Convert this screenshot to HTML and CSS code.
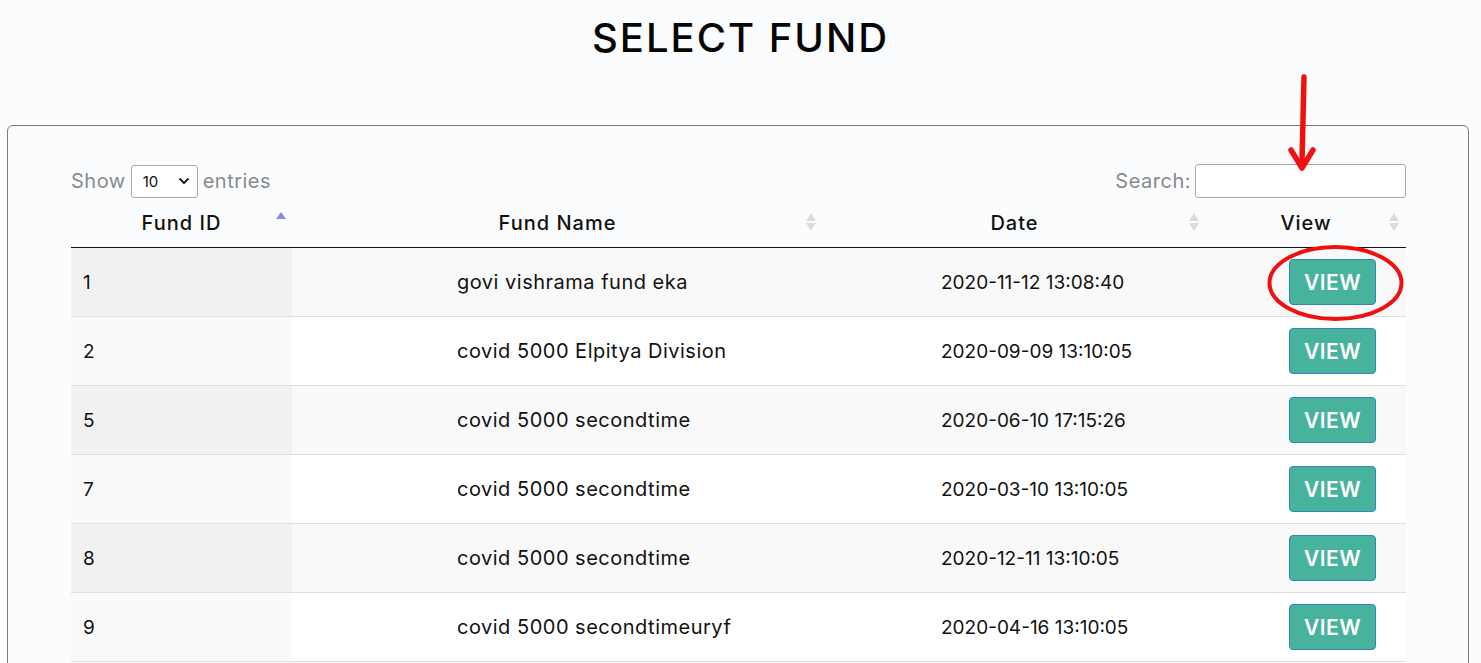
FILE: index.html
```html
<!DOCTYPE html>
<html lang="en">
<head>
<meta charset="utf-8">
<title>Select Fund</title>
<link rel="stylesheet" href="styles.css">
</head>
<body>
<h1 class="title">SELECT FUND</h1>
<div class="card">
  <div class="controls">
    <label class="length">Show
      <span class="select"><span class="select-val">10</span>
        <svg class="chev" width="12" height="8" viewBox="0 0 12 8"><path d="M1.5 1.5 L6 6 L10.5 1.5" fill="none" stroke="#222" stroke-width="2"/></svg>
      </span>
    entries</label>
    <label class="search">Search:<input type="text" class="search-input"></label>
  </div>
  <table class="funds">
    <colgroup>
      <col class="c1"><col class="c2"><col class="c3"><col class="c4">
    </colgroup>
    <thead>
      <tr>
        <th class="sort asc">Fund ID</th>
        <th class="sort">Fund Name</th>
        <th class="sort">Date</th>
        <th class="sort">View</th>
      </tr>
    </thead>
    <tbody>
      <tr><td class="id">1</td><td class="name">govi vishrama fund eka</td><td class="date">2020-11-12 13:08:40</td><td class="act"><button class="btn">VIEW</button></td></tr>
      <tr><td class="id">2</td><td class="name">covid 5000 Elpitya Division</td><td class="date">2020-09-09 13:10:05</td><td class="act"><button class="btn">VIEW</button></td></tr>
      <tr><td class="id">5</td><td class="name">covid 5000 secondtime</td><td class="date">2020-06-10 17:15:26</td><td class="act"><button class="btn">VIEW</button></td></tr>
      <tr><td class="id">7</td><td class="name">covid 5000 secondtime</td><td class="date">2020-03-10 13:10:05</td><td class="act"><button class="btn">VIEW</button></td></tr>
      <tr><td class="id">8</td><td class="name">covid 5000 secondtime</td><td class="date">2020-12-11 13:10:05</td><td class="act"><button class="btn">VIEW</button></td></tr>
      <tr><td class="id">9</td><td class="name">covid 5000 secondtimeuryf</td><td class="date">2020-04-16 13:10:05</td><td class="act"><button class="btn">VIEW</button></td></tr>
    </tbody>
  </table>
</div>
<svg class="annot" width="1481" height="663" viewBox="0 0 1481 663">
  <path d="M1304 77 L1302 162" stroke="#f01010" stroke-width="5.5" stroke-linecap="round" fill="none"/>
  <path d="M1291 150 L1302 168 L1313 150" stroke="#f01010" stroke-width="5.5" stroke-linecap="round" stroke-linejoin="round" fill="none"/>
  <ellipse cx="1335.5" cy="283" rx="66" ry="36" stroke="#ee1111" stroke-width="4" fill="none"/>
</svg>
</body>
</html>
```
FILE: styles.css
```css
html, body {
  margin: 0;
  padding: 0;
}
body {
  background: #fbfcfe;
  font-family: Inter, "Noto Sans", sans-serif;
  color: #111;
  height: 663px;
  overflow: hidden;
}
.title {
  margin: 0;
  padding-top: 14px;
  text-align: center;
  font-size: 40px;
  font-weight: 500;
  line-height: 48px;
  letter-spacing: 2px;
  color: #050505;
}
.card {
  margin: 63px 12px 0 7px;
  border: 1px solid #7a7a7a;
  border-radius: 6px;
  padding: 38px 62px 0 63px;
  height: 600px;
}
.controls {
  display: flex;
  justify-content: space-between;
  align-items: center;
  height: 34px;
  color: #8a8a8a;
  font-size: 20px;
  letter-spacing: 0.5px;
}
.length {
  display: flex;
  align-items: center;
  gap: 5px;
}
.select {
  display: inline-flex;
  align-items: center;
  justify-content: space-between;
  box-sizing: border-box;
  width: 67px;
  height: 33px;
  border: 1px solid #aaa;
  border-radius: 3px;
  padding: 0 7px 0 11px;
  background: #fff;
  color: #111;
  font-size: 15px;
  letter-spacing: 0;
}
.search {
  display: flex;
  align-items: center;
  gap: 4px;
}
.search-input {
  box-sizing: border-box;
  width: 211px;
  height: 34px;
  border: 1px solid #aaa;
  border-radius: 3px;
  background: #fff;
  margin: 0;
}
.funds {
  width: 1335px;
  border-collapse: collapse;
  table-layout: fixed;
  font-size: 19px;
}
.c1 { width: 221px; }
.c2 { width: 531px; }
.c3 { width: 383px; }
.c4 { width: 200px; }
.funds th {
  position: relative;
  height: 49px;
  padding: 0;
  font-size: 20px;
  font-weight: 500;
  letter-spacing: 1px;
  text-align: center;
  border-bottom: 1px solid #111;
  color: #111;
}
.sort::before,
.sort::after {
  content: "";
  position: absolute;
  right: 7px;
  width: 0;
  height: 0;
  border-left: 5px solid transparent;
  border-right: 5px solid transparent;
}
.sort::before {
  top: 15px;
  border-bottom: 8px solid #dcdcdc;
}
.sort.asc::before {
  top: 14px;
  right: 6px;
  border-bottom: 7px solid #8a8ad8;
}
.sort::after {
  top: 25px;
  border-top: 8px solid #dcdcdc;
}
.sort.asc::after {
  border-top-color: transparent;
}
.funds td {
  height: 69px;
  padding: 0;
  border-bottom: 1px solid #dedede;
  box-sizing: border-box;
  vertical-align: middle;
}
.funds tbody tr:nth-child(odd) td { background: #f9f9f9; }
.funds tbody tr:nth-child(odd) td.id { background: #f1f1f1; }
.funds tbody tr:nth-child(even) td { background: #ffffff; }
.funds tbody tr:nth-child(even) td.id { background: #fafafa; }
.id { padding-left: 12px !important; }
.name {
  padding-left: 165px !important;
  font-size: 20px;
  letter-spacing: 0.5px;
}
.date { padding-left: 118px !important; }
.act { padding-left: 83px !important; }
.btn {
  display: block;
  box-sizing: border-box;
  width: 87px;
  height: 46px;
  border: 1px solid #2f86b8;
  border-radius: 4px;
  background: #48b39c;
  color: #fff;
  font-family: inherit;
  font-size: 21px;
  font-weight: 600;
  letter-spacing: 0.5px;
  padding: 0;
}
.annot {
  position: absolute;
  left: 0;
  top: 0;
  pointer-events: none;
}
```
